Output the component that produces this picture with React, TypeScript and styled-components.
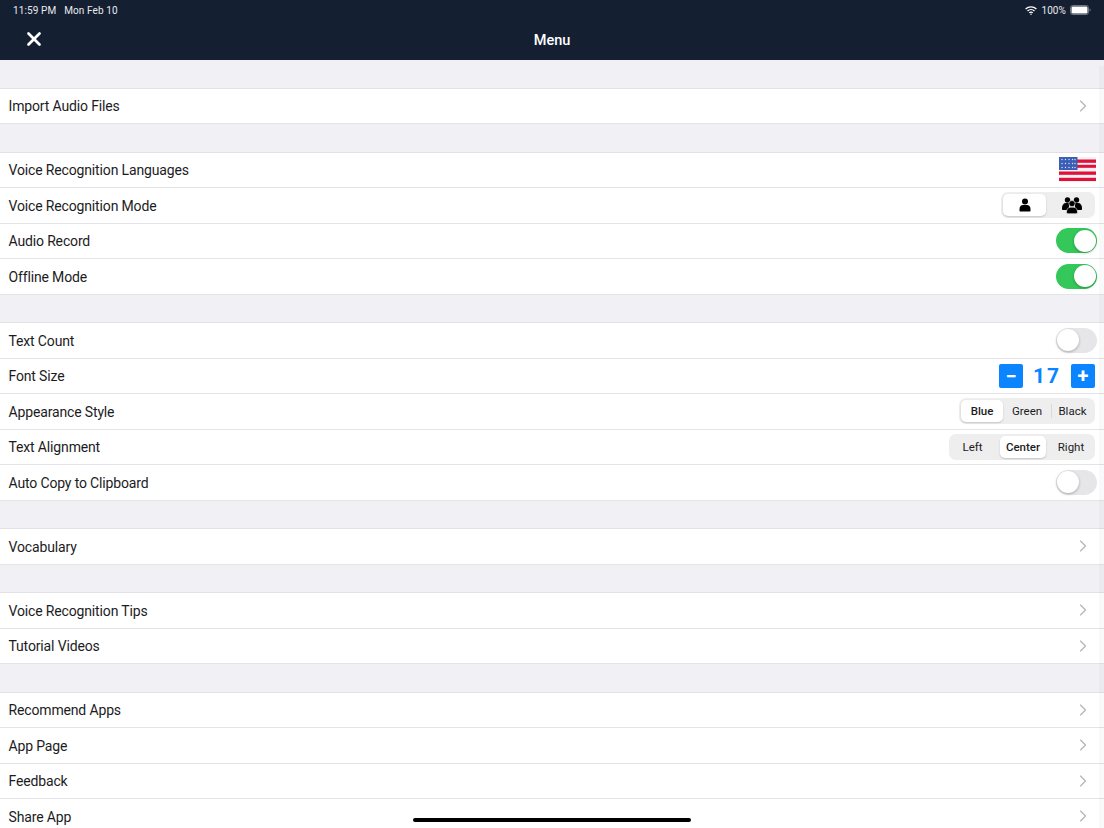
import { ReactElement, ReactNode, useState } from "react";
import styled, { createGlobalStyle } from "styled-components";
import { ChevronRight, X } from "lucide-react";

const GlobalStyle = createGlobalStyle`
  html, body {
    margin: 0;
    padding: 0;
    height: 100%;
    overflow: hidden;
    background: #f0f0f5;
    font-family: Roboto, "Liberation Sans", sans-serif;
  }
`;

const Page = styled.div`
  width: 1104px;
  height: 828px;
  overflow: hidden;
  position: relative;
  background: #f0f0f5;
`;

const Header = styled.header`
  height: 60px;
  background: #151f32;
  color: #fff;
  display: flex;
  flex-direction: column;
`;

const StatusBar = styled.div`
  height: 20px;
  padding: 0 13px;
  display: flex;
  align-items: center;
  justify-content: space-between;
  font-size: 10px;
  letter-spacing: 0.1px;
  color: #e8eaee;
`;

const StatusGroup = styled.div`
  display: flex;
  align-items: center;
  gap: 8px;
`;

const StatusRight = styled(StatusGroup)`
  gap: 4px;
`;

const NavBar = styled.div`
  height: 40px;
  display: flex;
  align-items: center;
  justify-content: center;
  position: relative;
  font-size: 14.5px;
  font-weight: 500;
`;

const CloseButton = styled.button`
  position: absolute;
  left: 23px;
  top: 8px;
  width: 22px;
  height: 22px;
  padding: 0;
  border: 0;
  background: none;
  color: #fff;
  display: flex;
  align-items: center;
  justify-content: center;
`;

const List = styled.main`
  padding-top: 28.5px;
  display: flex;
  flex-direction: column;
  gap: 28.5px;
`;

const Section = styled.section`
  background: #fff;
  box-shadow: 0 -1px 0 #e2e2e6;
`;

const Row = styled.div`
  height: 35.5px;
  box-sizing: border-box;
  padding: 0 7px 0 8.5px;
  display: flex;
  align-items: center;
  justify-content: space-between;
  color: #1c1c1e;
  border-bottom: 1px solid #e4e4e8;
`;

const Label = styled.span`
  font-size: 14px;
  letter-spacing: -0.15px;
  margin-top: 1px;
`;

const Chevron = styled(ChevronRight)`
  color: #b4b4b8;
  margin-right: 4px;
`;

const SwitchTrack = styled.div<{ $on: boolean }>`
  width: 41px;
  height: 25px;
  box-sizing: border-box;
  border-radius: 13px;
  background: ${(p) => (p.$on ? "#34c759" : "#e6e6e8")};
  position: relative;
`;

const SwitchKnob = styled.div<{ $on: boolean }>`
  position: absolute;
  top: 1.5px;
  left: ${(p) => (p.$on ? "17.5px" : "0.5px")};
  width: 22px;
  height: 22px;
  border-radius: 50%;
  background: #fff;
  box-shadow: 0 1px 3px rgba(0, 0, 0, 0.28);
`;

const Segments = styled.div`
  display: flex;
  align-items: center;
  height: 26px;
  padding: 2px;
  margin-right: 2px;
  box-sizing: border-box;
  background: #eeeeef;
  border-radius: 7px;
`;

const Segment = styled.div<{ $active?: boolean; $width: number; $nudge?: number }>`
  width: ${(p) => p.$width}px;
  height: 22px;
  box-sizing: border-box;
  padding-left: ${(p) => Math.max(p.$nudge ?? 0, 0)}px;
  padding-right: ${(p) => Math.max(-(p.$nudge ?? 0), 0)}px;
  display: flex;
  align-items: center;
  justify-content: center;
  font-size: 11.5px;
  font-weight: ${(p) => (p.$active ? 500 : 400)};
  color: #1c1c1e;
  border-radius: 5px;
  background: ${(p) => (p.$active ? "#fff" : "transparent")};
  box-shadow: ${(p) => (p.$active ? "0 1px 2px rgba(0,0,0,0.18)" : "none")};
`;

const SegmentDivider = styled.div`
  width: 1px;
  height: 14px;
  background: #d9d9dc;
`;

const Stepper = styled.div`
  display: flex;
  align-items: center;
  margin-right: 2px;
`;

const StepButton = styled.div`
  width: 24px;
  height: 24px;
  border-radius: 2px;
  background: #0a84ff;
  color: #fff;
  display: flex;
  align-items: center;
  justify-content: center;
  font-size: 20px;
  font-weight: 700;
  line-height: 1;
`;

const StepValue = styled.div`
  width: 48px;
  text-align: center;
  color: #0a84ff;
  font-size: 21px;
  font-weight: 700;
  letter-spacing: 2px;
`;

const ScrollBar = styled.div`
  position: absolute;
  right: 0;
  top: 66px;
  bottom: 0;
  width: 5px;
  background: rgba(0, 0, 0, 0.025);
`;

const HomeIndicator = styled.div`
  position: absolute;
  left: 413px;
  bottom: 6px;
  width: 278px;
  height: 4px;
  border-radius: 2px;
  background: #000;
`;

const FlagBox = styled.svg`
  margin-right: 1px;
`;

const Flag = () => (
  <FlagBox width="37" height="25" viewBox="0 0 37 25">
    <rect width="37" height="25" fill="#f1f1f3" />
    <rect y="2.500" width="37" height="3.300" fill="#e0103a" />
    <rect y="7.800" width="37" height="3" fill="#e0103a" />
    <rect y="14.500" width="37" height="3.300" fill="#e0103a" />
    <rect y="20.800" width="37" height="3.200" fill="#e0103a" />
    <rect x="0" y="0" width="18.500" height="13" fill="#3b5db5" />
    {[2.5, 6.5, 10.5].map((y) =>
      [3, 6.5, 10, 13.5, 16].map((x) => (
        <circle key={`${x}-${y}`} cx={x} cy={y} r="0.7" fill="#dfe6f7" />
      ))
    )}
  </FlagBox>
);

const PersonIcon = () => (
  <svg width="12" height="14" viewBox="0 0 12 14" fill="#000">
    <circle cx="6" cy="3.400" r="3" />
    <path d="M1.500 13.500c-.6 0-1-.4-1-1V11c0-2.400 1.600-4 3.500-4h4c1.900 0 3.500 1.600 3.500 4v1.500c0 .6-.4 1-1 1z" />
  </svg>
);

const GroupIcon = () => (
  <svg width="20" height="17" viewBox="0 0 20 17" fill="#000">
    <circle cx="5.500" cy="3" r="2.700" />
    <circle cx="14.500" cy="3" r="2.700" />
    <path d="M0 11c0-3 1.500-5 4-5h3v7H1c-.6 0-1-.4-1-1z" />
    <path d="M20 11c0-3-1.500-5-4-5h-3v7h6c.6 0 1-.4 1-1z" />
    <circle cx="10" cy="6.600" r="3.100" stroke="#eeeeef" strokeWidth="0.6" />
    <path d="M4.500 15.200c0-3 1.700-5 4-5h3c2.300 0 4 2 4 5 0 .9-.6 1.500-1.400 1.500H5.900c-.8 0-1.400-.6-1.400-1.500z" stroke="#eeeeef" strokeWidth="0.6" />
  </svg>
);

const WifiIcon = () => (
  <svg width="12" height="9" viewBox="0 0 12 9" fill="none" stroke="#fff" strokeLinecap="butt">
    <path d="M.6 3a7.800 7.800 0 0 1 10.800 0" strokeWidth="1.300" />
    <path d="M2.500 5a5 5 0 0 1 7 0" strokeWidth="1.300" />
    <path d="M4.300 6.900a2.400 2.400 0 0 1 3.400 0" strokeWidth="1.300" />
    <circle cx="6" cy="8.200" r="0.7" fill="#fff" stroke="none" />
  </svg>
);

const BatteryIcon = () => (
  <svg width="21" height="10" viewBox="0 0 21 10">
    <rect x="0.500" y="0.500" width="18" height="9" rx="2.200" fill="none" stroke="#6f7580" />
    <rect x="1.500" y="1.500" width="16" height="7" rx="1.200" fill="#fff" />
    <path d="M19.500 3.500c.8.200 1.200.8 1.200 1.500s-.4 1.300-1.200 1.500z" fill="#6f7580" />
  </svg>
);

const Switch = ({ on }: { on: boolean }) => {
  const [checked, setChecked] = useState(on);
  return (
    <SwitchTrack $on={checked} onClick={() => setChecked(!checked)}>
      <SwitchKnob $on={checked} />
    </SwitchTrack>
  );
};

const SettingRow = ({ label, children }: { label: string; children?: ReactNode }) => (
  <Row>
    <Label>{label}</Label>
    {children ?? <Chevron size={20} strokeWidth={1.4} />}
  </Row>
);

const FontStepper = () => {
  const [size, setSize] = useState(17);
  return (
    <Stepper>
      <StepButton onClick={() => setSize(size - 1)}>−</StepButton>
      <StepValue>{size}</StepValue>
      <StepButton onClick={() => setSize(size + 1)}>+</StepButton>
    </Stepper>
  );
};

function App(): ReactElement {
  return (
    <Page>
      <GlobalStyle />
      <Header>
        <StatusBar>
          <StatusGroup>
            <span>11:59 PM</span>
            <span>Mon Feb 10</span>
          </StatusGroup>
          <StatusRight>
            <WifiIcon />
            <span>100%</span>
            <BatteryIcon />
          </StatusRight>
        </StatusBar>
        <NavBar>
          <CloseButton>
            <X size={22} strokeWidth={3} />
          </CloseButton>
          Menu
        </NavBar>
      </Header>
      <List>
        <Section>
          <SettingRow label="Import Audio Files" />
        </Section>
        <Section>
          <SettingRow label="Voice Recognition Languages">
            <Flag />
          </SettingRow>
          <SettingRow label="Voice Recognition Mode">
            <Segments>
              <Segment $active $width={43}>
                <PersonIcon />
              </Segment>
              <Segment $width={47} $nudge={4}>
                <GroupIcon />
              </Segment>
            </Segments>
          </SettingRow>
          <SettingRow label="Audio Record">
            <Switch on />
          </SettingRow>
          <SettingRow label="Offline Mode">
            <Switch on />
          </SettingRow>
        </Section>
        <Section>
          <SettingRow label="Text Count">
            <Switch on={false} />
          </SettingRow>
          <SettingRow label="Font Size">
            <FontStepper />
          </SettingRow>
          <SettingRow label="Appearance Style">
            <Segments>
              <Segment $active $width={42}>Blue</Segment>
              <Segment $width={48}>Green</Segment>
              <SegmentDivider />
              <Segment $width={41}>Black</Segment>
            </Segments>
          </SettingRow>
          <SettingRow label="Text Alignment">
            <Segments>
              <Segment $width={49} $nudge={-6}>Left</Segment>
              <Segment $active $width={46}>Center</Segment>
              <Segment $width={47} $nudge={3}>Right</Segment>
            </Segments>
          </SettingRow>
          <SettingRow label="Auto Copy to Clipboard">
            <Switch on={false} />
          </SettingRow>
        </Section>
        <Section>
          <SettingRow label="Vocabulary" />
        </Section>
        <Section>
          <SettingRow label="Voice Recognition Tips" />
          <SettingRow label="Tutorial Videos" />
        </Section>
        <Section>
          <SettingRow label="Recommend Apps" />
          <SettingRow label="App Page" />
          <SettingRow label="Feedback" />
          <SettingRow label="Share App" />
        </Section>
      </List>
      <ScrollBar />
      <HomeIndicator />
    </Page>
  );
}

export default App;
